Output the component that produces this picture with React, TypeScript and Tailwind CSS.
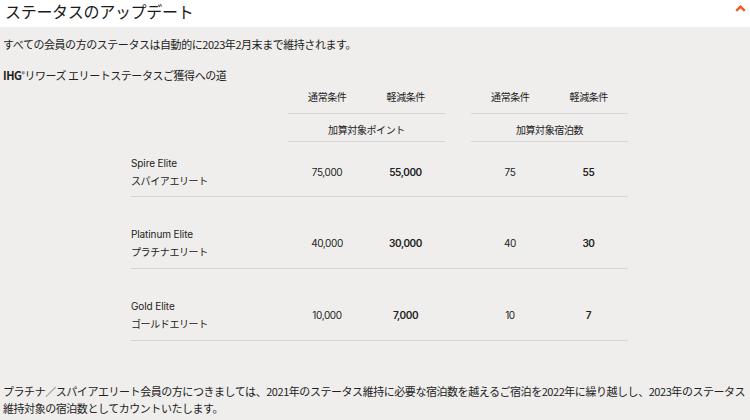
const rows = [
  { en: 'Spire Elite', ja: 'スパイアエリート', p1: '75,000', p2: '55,000', n1: '75', n2: '55' },
  { en: 'Platinum Elite', ja: 'プラチナエリート', p1: '40,000', p2: '30,000', n1: '40', n2: '30' },
  { en: 'Gold Elite', ja: 'ゴールドエリート', p1: '10,000', p2: '7,000', n1: '10', n2: '7' },
];

const jp = "font-['Noto_Sans_CJK_JP',sans-serif]";
const tbl = "font-['Inter','Noto_Sans_CJK_JP',sans-serif]";

// ヘッダー部分（通常条件 / 軽減条件 + 加算対象）
const GroupHead = ({ title }: { title: string }) => (
  <div className="w-[157px] flex flex-col">
    <div className="h-[30px] pt-[6px] flex border-b border-[#d5d5d5]">
      <div className="flex-1 text-center leading-[14px]">通常条件</div>
      <div className="flex-1 text-center leading-[14px]">軽減条件</div>
    </div>
    <div className="h-[28px] pt-[9px] text-center leading-[14px] border-b border-[#d5d5d5]">{title}</div>
  </div>
);

export default function App() {
  return (
    <div className={`w-[750px] h-[420px] overflow-hidden bg-[#efeeec] text-[#222] ${jp}`}>
      <div className="h-[27px] bg-white flex items-start justify-between pl-[5px] pr-[4px]">
        <h2 className="text-[16px] leading-[22px] tracking-[-0.3px] text-[#1a1a1a]">ステータスのアップデート</h2>
        <svg width="11" height="7" viewBox="0 0 11 7" className="mt-[5px]">
          <polyline points="1.2,5.8 5.5,1.6 9.8,5.8" fill="none" stroke="#f15a22" strokeWidth="2.4" />
        </svg>
      </div>

      <p className="pl-[3px] pt-[9px] text-[11px] leading-[17px] tracking-[-0.45px]">
        すべての会員の方のステータスは自動的に2023年2月末まで維持されます。
      </p>
      <p className="pl-[3px] pt-[14px] text-[11px] leading-[17px] tracking-[-0.45px]">
        <span className="font-bold">IHG</span>
        <sup className="text-[7px]">®</sup>リワーズ エリートステータスご獲得への道
      </p>

      <div className={`ml-[131px] w-[497px] text-[10px] tracking-[-0.4px] text-[#222] ${tbl}`}>
        <div className="flex">
          <div className="w-[157px]"></div>
          <GroupHead title="加算対象ポイント" />
          <div className="w-[26px]"></div>
          <GroupHead title="加算対象宿泊数" />
        </div>

        {rows.map((r, i) => (
          <div
            key={r.en}
            className={`flex items-center border-b border-[#d5d5d5] ${i === 0 ? 'pt-[12px] pb-[6px]' : 'pt-[28px] pb-[7px]'}`}
          >
            <div className="w-[157px] leading-[18px]">
              <div className="tracking-[-0.1px]">{r.en}</div>
              <div>{r.ja}</div>
            </div>
            <div className="w-[78px] text-center">{r.p1}</div>
            <div className="w-[79px] text-center font-semibold">{r.p2}</div>
            <div className="w-[26px]"></div>
            <div className="w-[78px] text-center">{r.n1}</div>
            <div className="w-[79px] text-center font-semibold">{r.n2}</div>
          </div>
        ))}
      </div>

      <div className="pl-[3px] mt-[42px] text-[11px] leading-[17px] tracking-[-0.45px]">
        <div className="whitespace-nowrap">
          プラチナ／スパイアエリート会員の方につきましては、2021年のステータス維持に必要な宿泊数を越えるご宿泊を2022年に繰り越しし、2023年のステータス
        </div>
        <div>維持対象の宿泊数としてカウントいたします。</div>
      </div>
    </div>
  );
}
